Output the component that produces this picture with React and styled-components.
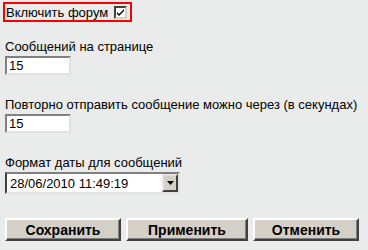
import React from "react";
import styled, { createGlobalStyle } from "styled-components";

const GlobalStyle = createGlobalStyle`
    body {
        margin: 0;
        background: #E9ECEA;
        font-family: "Liberation Sans", Arial, sans-serif;
        font-size: 13px;
        color: #000;
    }
`;

const Form = styled('form')`
    width: 368px;
    height: 250px;
    padding: 2px 0 0 5px;
    box-sizing: border-box;
    display: flex;
    flex-direction: column;
    align-items: flex-start;
    white-space: nowrap;
`;

const Toggle = styled('label')`
    display: flex;
    align-items: center;
    gap: 6px;
    height: 16px;
    margin-left: -2px;
    padding: 0 3px 0 1px;
    border: 2px solid #FF0000;
`;

const Check = styled('span')`
    width: 9px;
    height: 9px;
    background: #fff;
    border: 2px solid;
    border-color: #404040 #D4D0C8 #D4D0C8 #404040;
    display: flex;
    align-items: center;
    justify-content: center;
`;

const Field = styled('div')`
    display: flex;
    flex-direction: column;
    align-items: flex-start;
    margin-top: ${p => p.$top}px;
`;

const Label = styled('span')`
    line-height: 16px;
    margin-bottom: 1px;
`;

const Input = styled('input')`
    width: 60px;
    height: 15px;
    padding: 0 0 0 2px;
    border: 2px solid;
    border-color: #808080 #E4E2DC #E4E2DC #808080;
    background: #fff;
    font-family: "Liberation Sans", Arial, sans-serif;
    font-size: 13px;
    color: #000;
    outline: none;
    box-sizing: content-box;
`;

const SelectBox = styled('div')`
    display: flex;
    width: 171px;
    height: 18px;
    border: 2px solid;
    border-color: #808080 #E4E2DC #E4E2DC #404040;
    background: #fff;
`;

const Select = styled('select')`
    appearance: none;
    flex: 1;
    border: none;
    background: transparent;
    padding: 0 0 0 3px;
    font-family: "Liberation Sans", Arial, sans-serif;
    font-size: 13px;
    color: #000;
    outline: none;
`;

const Arrow = styled('span')`
    width: 12px;
    height: 14px;
    background: #D4D0C8;
    border: 2px solid;
    border-color: #E4E2DC #404040 #404040 #E4E2DC;
    display: flex;
    align-items: center;
    justify-content: center;
`;

const Buttons = styled('div')`
    display: flex;
    gap: 5px;
    margin-top: 24px;
`;

const Button = styled('button')`
    width: ${p => p.$w}px;
    height: 23px;
    background: #D4D0C8;
    border: 2px solid;
    border-color: #fff #404040 #404040 #fff;
    box-shadow: inset -1px -1px 0 #808080;
    font-family: "Liberation Sans", Arial, sans-serif;
    font-weight: bold;
    font-size: 14px;
    color: #000;
    padding: 0;
`;

const App = () => {
    return (
        <>
            <GlobalStyle />
            <Form>
                <Toggle>
                    Включить форум
                    <Check>
                        <svg width="7" height="7" viewBox="0 0 7 7">
                            <path d="M0 3 L2 5 L7 0 L7 2 L2 7 L0 5 Z" fill="#000" />
                        </svg>
                    </Check>
                </Toggle>
                <Field $top={17}>
                    <Label>Сообщений на странице</Label>
                    <Input defaultValue="15" />
                </Field>
                <Field $top={22}>
                    <Label>Повторно отправить сообщение можно через (в секундах)</Label>
                    <Input defaultValue="15" />
                </Field>
                <Field $top={22}>
                    <Label>Формат даты для сообщений</Label>
                    <SelectBox>
                        <Select defaultValue="1">
                            <option value="1">28/06/2010 11:49:19</option>
                        </Select>
                        <Arrow>
                            <svg width="7" height="4" viewBox="0 0 7 4">
                                <path d="M0 0 H7 L3.5 4 Z" fill="#000" />
                            </svg>
                        </Arrow>
                    </SelectBox>
                </Field>
                <Buttons>
                    <Button type="button" $w={116}>Сохранить</Button>
                    <Button type="button" $w={122}>Применить</Button>
                    <Button type="button" $w={106}>Отменить</Button>
                </Buttons>
            </Form>
        </>
    );
};

export default App;
